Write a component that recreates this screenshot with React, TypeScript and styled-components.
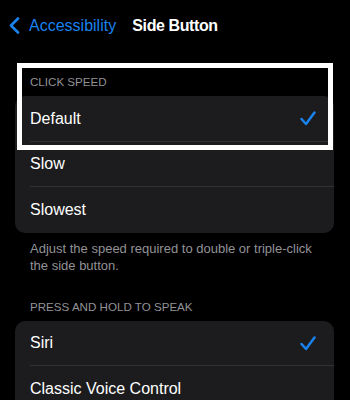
import React from "react";
import styled, { createGlobalStyle } from "styled-components";

const Global = createGlobalStyle`
  html, body { margin: 0; padding: 0; background: #000; }
  body { font-family: "Liberation Sans", Arial, sans-serif; -webkit-font-smoothing: antialiased; }
  * { box-sizing: border-box; }
`;

const Page = styled.div`
  position: relative;
  width: 350px;
  height: 400px;
  overflow: hidden;
  background: #000;
  color: #fff;
`;

const NavBar = styled.div`
  height: 48px;
  display: grid;
  grid-template-columns: 1fr auto 1fr;
  align-items: center;
  padding-top: 3px;
`;

const Back = styled.div`
  display: flex;
  align-items: center;
  gap: 9px;
  padding-left: 9px;
  color: #1a82ee;
  font-size: 16px;
  line-height: 20px;
`;

const Title = styled.div`
  font-size: 16px;
  font-weight: 700;
  letter-spacing: -0.4px;
  line-height: 20px;
  color: #fff;
`;

const SectionHeader = styled.div<{ $top: number }>`
  padding: ${(p) => p.$top}px 30px 6px;
  font-size: 11.6px;
  line-height: 16px;
  color: #929297;
  text-transform: uppercase;
`;

const Card = styled.div`
  margin: 0 16px 0 15px;
  background: #1c1c1e;
  border-radius: 10px;
  overflow: hidden;
`;

const Row = styled.div<{ $last?: boolean }>`
  position: relative;
  height: 45.5px;
  display: flex;
  align-items: center;
  justify-content: space-between;
  padding: 0 18px 0 15px;
  font-size: 16px;
  color: #fff;
  &::after {
    content: "";
    display: ${(p) => (p.$last ? "none" : "block")};
    position: absolute;
    left: 15px;
    right: 0;
    bottom: 0;
    height: 1px;
    background: #323235;
  }
`;

const Footer = styled.div`
  padding: 7px 30px 0;
  font-size: 13px;
  line-height: 17px;
  color: #929297;
`;

const Highlight = styled.div`
  position: absolute;
  left: 17px;
  top: 63px;
  width: 316px;
  height: 87px;
  border: 5px solid #fff;
  pointer-events: none;
`;

const Chevron = () => (
  <svg width="11" height="17" viewBox="0 0 11 17" fill="none">
    <path d="M9 1.5L2 8.5L9 15.5" stroke="#1a82ee" strokeWidth="2.6" strokeLinecap="round" strokeLinejoin="round" />
  </svg>
);

const Check = () => (
  <svg width="16" height="15" viewBox="0 0 16 15" fill="none">
    <path d="M1.5 8L6 13L14.5 1.5" stroke="#1a82ee" strokeWidth="2.5" strokeLinecap="round" strokeLinejoin="round" />
  </svg>
);

export default function App() {
  return (
    <Page>
      <Global />
      <NavBar>
        <Back>
          <Chevron />
          <span>Accessibility</span>
        </Back>
        <Title>Side Button</Title>
        <div />
      </NavBar>

      <SectionHeader $top={26}>Click Speed</SectionHeader>
      <Card>
        <Row>
          <span>Default</span>
          <Check />
        </Row>
        <Row>
          <span>Slow</span>
        </Row>
        <Row $last>
          <span>Slowest</span>
        </Row>
      </Card>
      <Footer>Adjust the speed required to double or triple-click the side button.</Footer>

      <SectionHeader $top={25}>Press and Hold to Speak</SectionHeader>
      <Card>
        <Row>
          <span>Siri</span>
          <Check />
        </Row>
        <Row $last>
          <span>Classic Voice Control</span>
        </Row>
      </Card>

      <Highlight />
    </Page>
  );
}
